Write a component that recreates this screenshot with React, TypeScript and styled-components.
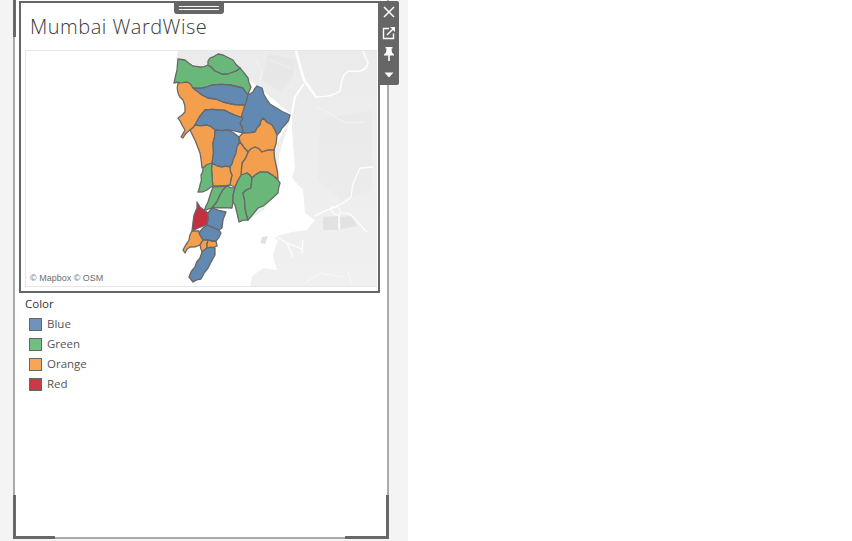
import React from "react";
import styled, { createGlobalStyle } from "styled-components";

const Global = createGlobalStyle`
  html, body { margin: 0; padding: 0; background: #fff; }
  #root { width: 852px; height: 541px; overflow: hidden; }
`;

const Strip = styled.div`
  width: 408px;
  height: 541px;
  box-sizing: border-box;
  padding: 0 19px 0 13px;
  background: #f4f4f4;
`;

const Panel = styled.div`
  position: relative;
  width: 376px;
  height: 539px;
  box-sizing: border-box;
  padding: 1px 0 0 4px;
  background: #fff;
  border: solid #ababab;
  border-width: 0 2px 2px 2px;
`;

const Corner = styled.div<{ $side: "left" | "right"; $w: number }>`
  position: absolute;
  bottom: -2px;
  ${(p) => p.$side}: -2px;
  width: ${(p) => p.$w}px;
  height: 44px;
  box-sizing: border-box;
  border-bottom: 3px solid #696969;
  border-${(p) => p.$side}: 3px solid #696969;
`;

const TopMark = styled.div`
  position: absolute;
  top: 0;
  left: -2px;
  width: 3px;
  height: 37px;
  background: #696969;
`;

const Zone = styled.div`
  position: relative;
  width: 361px;
  height: 292px;
  box-sizing: border-box;
  padding: 0 0 0 4px;
  border: 2px solid #666;
`;

const Handle = styled.div`
  position: absolute;
  top: -1px;
  left: 153px;
  width: 50px;
  height: 12px;
  box-sizing: border-box;
  padding: 4px 5px 0;
  display: flex;
  flex-direction: column;
  gap: 2px;
  background: #666;
  border-radius: 0 0 3px 3px;
`;

const HandleLine = styled.div`
  height: 1px;
  background: #fff;
`;

const Title = styled.h1`
  margin: 0;
  height: 47px;
  padding: 11px 0 0 5px;
  box-sizing: border-box;
  font: 300 20px/26px "Open Sans", sans-serif;
  letter-spacing: 0.5px;
  color: #3a3a3a;
`;

const MapFrame = styled.div`
  position: relative;
  width: 352px;
  height: 237px;
  box-sizing: border-box;
  border: solid #e6e6e6;
  border-width: 1px 0 1px 1px;
  overflow: hidden;
`;

const MapSvg = styled.svg`
  display: block;
  width: 352px;
  height: 237px;
  margin: -1px 0 0 -1px;
`;

const Attribution = styled.span`
  position: absolute;
  left: 4px;
  bottom: 2px;
  font: 400 9px/11px "Liberation Sans", sans-serif;
  color: #6f6f6f;
`;

const Toolbar = styled.div`
  position: absolute;
  top: -2px;
  left: 357px;
  width: 21px;
  height: 84px;
  display: flex;
  flex-direction: column;
  background: #666;
  border-radius: 2px;
`;

const ToolButton = styled.div`
  height: 21px;
  display: flex;
  align-items: center;
  justify-content: center;
`;

const Legend = styled.section`
  padding: 1px 0 0 6px;
  font: 400 11.5px/20px "Open Sans", sans-serif;
`;

const LegendTitle = styled.div`
  height: 20px;
  color: #333;
  font-weight: 500;
`;

const LegendRow = styled.div`
  display: flex;
  align-items: center;
  gap: 5px;
  height: 20px;
  padding-left: 4px;
  color: #555;
`;

const Swatch = styled.span<{ $color: string }>`
  width: 13px;
  height: 13px;
  box-sizing: border-box;
  border: 1px solid #666;
  background: ${(p) => p.$color};
`;

const Land = styled.path`
  fill: url(#landShade);
`;
const Blotch = styled.path<{ $o?: number }>`
  fill: #dedede;
  opacity: ${(p) => p.$o ?? 0.3};
`;
const Water = styled.path`
  fill: #fff;
`;
const River = styled.path<{ $w: number; $o?: number }>`
  fill: none;
  stroke: #fff;
  stroke-width: ${(p) => p.$w};
  stroke-linecap: round;
  stroke-linejoin: round;
  opacity: ${(p) => p.$o ?? 1};
`;
const Ward = styled.polygon<{ $color: string }>`
  fill: ${(p) => p.$color};
  stroke: #686868;
  stroke-width: 1.3;
  stroke-linejoin: round;
`;

const B = "#6289b1";
const G = "#69b87a";
const O = "#f49f4d";
const R = "#c3303f";

const wards: [string, string][] = [
  [G, "178,59 185,60 193,66 200,67 208,65 215,71 222,74 233,72 240,68 248,78 251,87 248,95 243,88 230,85 212,85 202,88 193,88 185,85 178,82 174,83 177,70"],
  [G, "208,65 210,58 218,54 227,57 233,60 240,68 233,72 222,74 215,71"],
  [O, "178,83 187,82 193,88 202,95 208,98 223,102 245,105 243,118 228,112 220,110 205,110 195,125 190,130 183,138 181,137 185,130 182,125 178,118 182,115 185,112 183,100 178,93"],
  [B, "193,88 202,88 212,85 230,85 243,88 248,95 246,105 223,102 208,98 202,95"],
  [B, "248,95 253,92 257,86 262,88 267,100 275,107 290,115 285,125 280,132 277,135 272,125 263,118 260,125 255,132 243,133 240,123 245,105"],
  [B, "205,110 220,110 228,112 243,118 240,123 243,133 228,130 215,130 207,125 195,125"],
  [O, "195,125 207,125 215,130 213,143 212,163 202,168 200,153 190,130"],
  [B, "215,130 228,130 239,137 237,147 233,160 230,167 222,167 212,163 213,143"],
  [O, "239,137 243,133 255,132 260,125 263,118 272,125 277,135 274,150 262,152 255,147 253,152 248,152 240,142"],
  [O, "248,152 255,147 262,152 274,150 276,165 278,179 268,172 260,172 252,178 247,173 241,176 242,163"],
  [O, "237,147 240,142 248,152 242,163 241,176 235,187 230,185 232,175 230,167 233,160"],
  [O, "212,163 222,167 230,167 232,175 230,185 220,186 213,186 212,175"],
  [G, "201,175 203,168 212,163 212,175 213,186 207,190 198,192 200,185"],
  [G, "213,187 227,186 220,195 212,208 204,211 208,202"],
  [G, "227,186 235,188 233,202 232,208 212,208 220,195"],
  [G, "235,188 241,175 247,173 252,178 251,188 243,193 245,208 248,220 239,222 235,205 233,202"],
  [G, "252,178 260,172 267,172 277,179 280,183 278,193 268,202 258,208 248,220 245,208 243,193 251,188"],
  [R, "197,202 200,207 204,210 208,213 207,225 192,231 194,215 197,208"],
  [B, "208,213 212,208 226,212 222,228 219,230 208,225 207,225"],
  [B, "207,225 219,230 221,233 216,241 203,240 199,233"],
  [O, "192,231 199,231 199,233 203,240 200,245 190,247 185,253 183,250 189,240"],
  [O, "203,240 208,240 207,248 202,252 200,245"],
  [O, "208,240 216,241 217,246 212,248 207,248"],
  [B, "202,252 207,248 215,248 215,255 208,268 201,279 193,282 189,277 195,267 200,258"],
];

// Adds a small wobble to long edges; keyed on the edge so neighbouring wards stay joined.
function roughen(points: string): string {
  const pts = points.split(" ").map((p) => p.split(",").map(Number));
  const out: string[] = [];
  pts.forEach(([x, y], i) => {
    const [nx, ny] = pts[(i + 1) % pts.length];
    out.push(`${x},${y}`);
    const len = Math.hypot(nx - x, ny - y);
    if (len > 7) {
      const seed = (x + nx) * 12.9898 + (y + ny) * 78.233;
      const n = Math.sin(seed) * 43758.5453;
      const j = (n - Math.floor(n) - 0.5) * 2.2;
      const sign = x < nx || (x === nx && y < ny) ? 1 : -1;
      const mx = (x + nx) / 2 + (sign * j * -(ny - y)) / len;
      const my = (y + ny) / 2 + (sign * j * (nx - x)) / len;
      out.push(`${mx.toFixed(1)},${my.toFixed(1)}`);
    }
  });
  return out.join(" ");
}

const legend: [string, string][] = [
  ["Blue", "#6f93ba"],
  ["Green", "#70bf80"],
  ["Orange", "#f7a556"],
  ["Red", "#c93a49"],
];

export default function App() {
  return (
    <Strip>
      <Global />
      <Panel>
        <TopMark />
        <Zone>
          <Handle>
            <HandleLine />
            <HandleLine />
          </Handle>
          <Title>Mumbai WardWise</Title>
          <MapFrame>
            <MapSvg viewBox="25 50 352 237">
              <defs>
                <linearGradient id="landShade" x1="0" y1="0" x2="0" y2="1">
                  <stop offset="0" stopColor="#ebebeb" />
                  <stop offset="0.5" stopColor="#eeeeee" />
                  <stop offset="1" stopColor="#f0f0f0" />
                </linearGradient>
              </defs>
              <Land d="M178 50 H377 V287 H250 L252 276 L263 268 L272 257 L278 240 L266 236 L255 240 L240 215 L292 115 L250 80 L176 60 Z" />
              <Blotch d="M268 54 L296 60 L292 78 L280 92 L262 80 Z" />
              <Blotch d="M320 120 L372 110 L372 190 L340 200 L318 180 Z" $o={0.15} />
              <Blotch d="M323 217 L338 216 L338 230 L323 230 Z" $o={0.8} />
              <Blotch d="M340 217 L352 216 L357 226 L341 229 Z" $o={0.8} />
              <Water d="M292 113 L279 155 L278 180 L264 210 L240 225 L225 262 L222 287 L250 287 L252 276 L263 268 L277 270 L272 253 L270 245 L277 236 L292 232 L307 230 L315 220 L305 213 L303 190 L292 178 L295 167 L292 130 Z" />
              <Blotch d="M262 237 L268 236 L265 244 L260 243 Z" $o={0.9} />
              <River $w={2.6} $o={0.9} d="M296 51 L300 66 L304 80 L316 97" />
              <River $w={1.6} $o={0.9} d="M316 97 C325 97 335 95 340 91 C342 80 342 73 350 71 C358 72 366 72 368 63 L363 51" />
              <River $w={2.2} $o={0.9} d="M303 85 L295 97 L292 113" />
              <River $w={1.3} $o={0.9} d="M315 216 C322 212 326 210 330 209 C338 206 346 202 351 197 L353 184 L360 168 L373 167" />
              <River $w={1.2} $o={0.9} d="M331 208 C332 215 338 216 340 214 C342 211 338 204 331 208 M339 216 L339 228 M343 213 L350 214 L367 232" />
              <River $w={1.2} $o={0.9} d="M277 237 L287 243 L293 257 M303 240 L302 253 M287 243 L302 249" />
              <River $w={0.6} $o={0.7} d="M317 107 C326 110 336 118 346 123 L363 122" />
              <River $w={0.7} $o={0.7} d="M305 283 L320 273 L343 277 M348 272 L352 286" />
              <River $w={0.6} $o={0.6} d="M255 58 L262 72 L258 90 M270 60 L290 68" />
              {wards.map(([color, points], i) => (
                <Ward key={i} $color={color} points={roughen(points)} />
              ))}
            </MapSvg>
            <Attribution>© Mapbox © OSM</Attribution>
          </MapFrame>
          <Toolbar>
            <ToolButton>
              <svg width="14" height="14" viewBox="0 0 14 14">
                <path d="M2 2 L12 12 M12 2 L2 12" stroke="#fff" strokeWidth="1.5" fill="none" />
              </svg>
            </ToolButton>
            <ToolButton>
              <svg width="14" height="14" viewBox="0 0 14 14">
                <path d="M7 2.5 H1.5 V12.5 H11.5 V7.5" stroke="#fff" strokeWidth="1.4" fill="none" />
                <path d="M5 9 L11.5 2.5" stroke="#fff" strokeWidth="1.5" fill="none" />
                <path d="M8 1 H13 V6 Z" fill="#fff" />
              </svg>
            </ToolButton>
            <ToolButton>
              <svg width="12" height="15" viewBox="0 0 12 15">
                <path d="M2.5 1 H9.5 V2.5 H8.5 L9 6.5 L11 8.5 V9.5 H1 V8.5 L3 6.5 L3.5 2.5 H2.5 Z" fill="#fff" />
                <rect x="5.2" y="9" width="1.6" height="6" fill="#fff" />
              </svg>
            </ToolButton>
            <ToolButton>
              <svg width="10" height="6" viewBox="0 0 10 6">
                <path d="M0.5 0.5 H9.5 L5 5.5 Z" fill="#fff" />
              </svg>
            </ToolButton>
          </Toolbar>
        </Zone>
        <Legend>
          <LegendTitle>Color</LegendTitle>
          {legend.map(([name, color]) => (
            <LegendRow key={name}>
              <Swatch $color={color} />
              {name}
            </LegendRow>
          ))}
        </Legend>
        <Corner $side="left" $w={42} />
        <Corner $side="right" $w={44} />
      </Panel>
    </Strip>
  );
}
